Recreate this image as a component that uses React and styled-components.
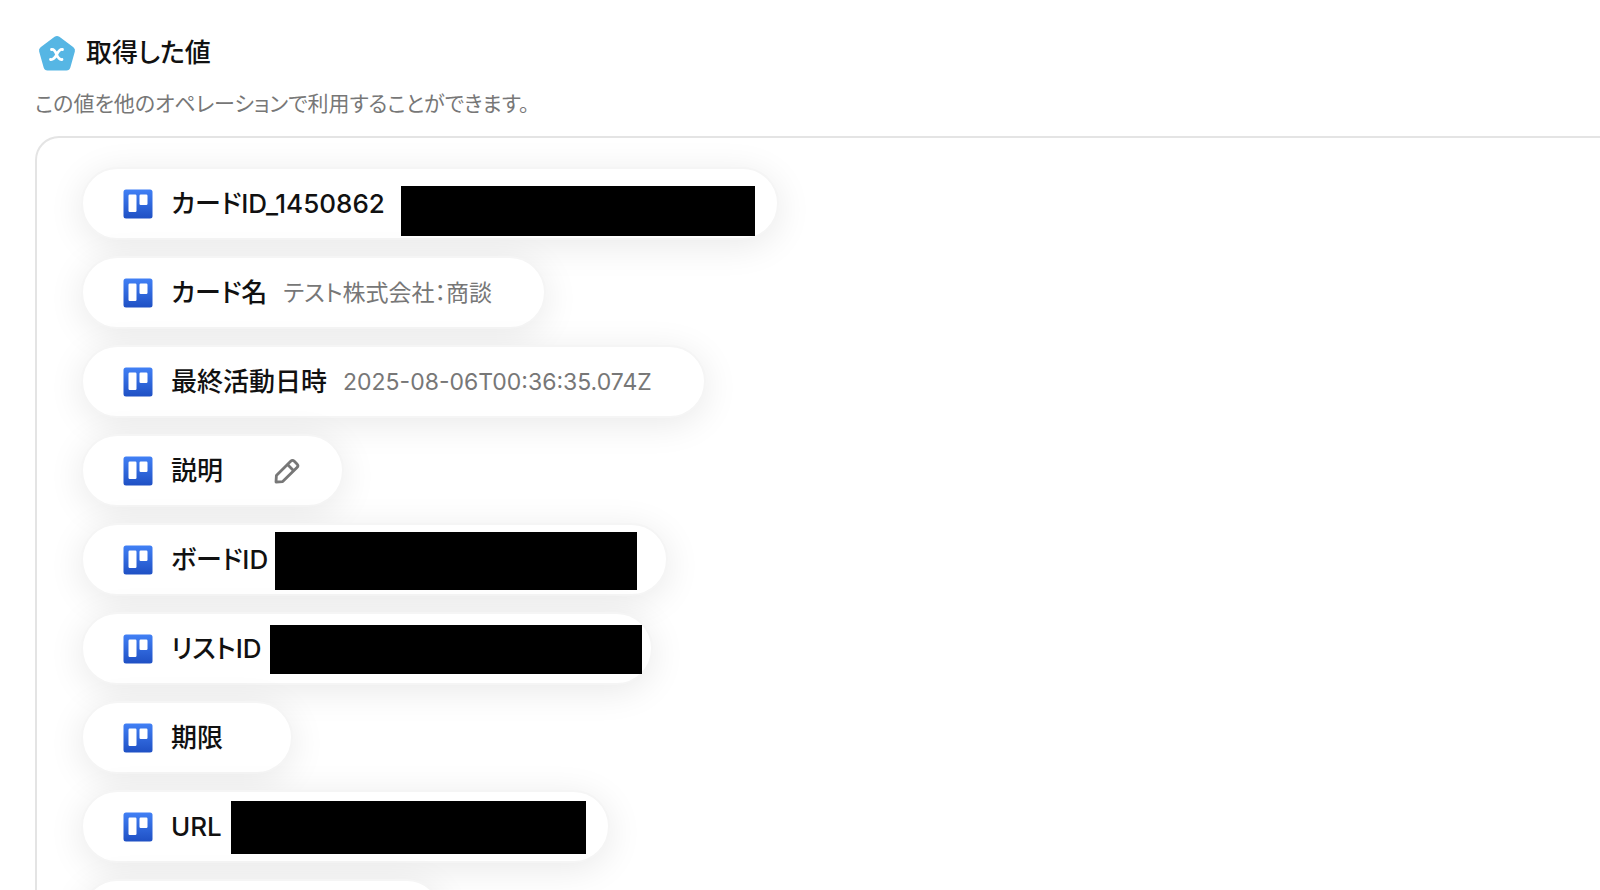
import React from "react";
import styled, { createGlobalStyle } from "styled-components";

const GlobalStyle = createGlobalStyle`
  * {
    box-sizing: border-box;
  }

  body {
    margin: 0;
    background: #fff;
    color: #111;
    font-family: Inter, "Noto Sans CJK JP", sans-serif;
    font-feature-settings: "palt";
  }
`;

const Page = styled.main`
  height: 100vh;
  overflow: hidden;
  padding: 33px 0 0 35px;
  display: flex;
  flex-direction: column;
`;

const Header = styled.header`
  display: flex;
  align-items: center;
  gap: 8px;
  height: 40px;
  padding-left: 1px;
`;

const Title = styled.h1`
  margin: 0;
  font-size: 26px;
  font-weight: 500;
  line-height: 40px;
`;

const Description = styled.p`
  margin: 15px 0 16px;
  color: #777;
  font-size: 21px;
  line-height: 32px;
`;

const Panel = styled.section`
  flex: 1 0 auto;
  padding: 29px 0 29px 44px;
  border: solid #e4e4e4;
  border-width: 2px 0 0 2px;
  border-radius: 24px 0 0 0;
`;

const List = styled.ul`
  display: flex;
  flex-direction: column;
  align-items: flex-start;
  gap: 16px;
  margin: 0;
  padding: 0;
  list-style: none;
`;

const Pill = styled.li`
  display: flex;
  align-items: center;
  height: 73px;
  padding: 0 ${(p) => (p.$editable ? 41 : 52)}px 0 40px;
  border: 2px solid #f5f5f5;
  border-radius: 37px;
  background: #fff;
  box-shadow: 0 6px 36px rgba(0, 0, 0, 0.09);
`;

const Label = styled.span`
  margin: 0 16px 0 18px;
  font-size: 26px;
  font-weight: 500;
  line-height: 40px;
  white-space: nowrap;
`;

const Value = styled.span`
  color: #777;
  font-size: 23px;
  line-height: 40px;
  white-space: nowrap;
`;

const HiddenValue = styled.span`
  position: relative;
  align-self: stretch;
  width: ${(p) => p.$room}px;
`;

// covers the private part of a value
const Mask = styled.span`
  position: absolute;
  left: ${(p) => p.$left}px;
  top: ${(p) => p.$top}px;
  width: ${(p) => p.$width}px;
  height: ${(p) => p.$height}px;
  background: #000;
`;

const EditButton = styled.button`
  display: flex;
  margin-left: 34px;
  padding: 0;
  border: 0;
  background: none;
  color: #777;
  cursor: pointer;
`;

const rows = [
  { label: "カードID_1450862", room: 324, mask: { left: 0, top: 17, width: 354, height: 50 } },
  { label: "カード名", value: "テスト株式会社：商談" },
  { label: "最終活動日時", value: "2025-08-06T00:36:35.074Z" },
  { label: "説明", editable: true },
  { label: "ボードID", room: 330, mask: { left: -9, top: 7, width: 362, height: 58 } },
  { label: "リストID", room: 321, mask: { left: -8, top: 11, width: 372, height: 49 } },
  { label: "期限" },
  { label: "URL", room: 318, mask: { left: -7, top: 9, width: 355, height: 53 } },
  { label: "", room: 202 },
];

function PentagonIcon() {
  return (
    <svg width="42" height="40" viewBox="0 0 42 40" aria-hidden="true">
      <path
        d="M21 7 L35 17.5 L30.5 33.5 H11.5 L7 17.5 Z"
        fill="#56b6e4"
        stroke="#56b6e4"
        strokeWidth="8"
        strokeLinejoin="round"
      />
      <path
        d="M15.5 16.5 C21.5 15.5 19.5 27.5 26 26.5 M26.5 16.5 C20.5 15.5 21 27.5 14.5 26.5"
        fill="none"
        stroke="#fff"
        strokeWidth="2.8"
        strokeLinecap="round"
      />
    </svg>
  );
}

function BoardIcon() {
  return (
    <svg width="30" height="30" viewBox="0 0 30 30" aria-hidden="true">
      <defs>
        <linearGradient id="board" x1="0" y1="0" x2="0" y2="1">
          <stop offset="0" stopColor="#4180f5" />
          <stop offset="1" stopColor="#1f50c4" />
        </linearGradient>
      </defs>
      <rect x="0.5" y="0.5" width="29" height="29" rx="2.5" fill="url(#board)" />
      <rect x="5.5" y="5.5" width="8" height="17.5" rx="1.2" fill="#fff" />
      <rect x="16.5" y="5.5" width="8" height="10.5" rx="1.2" fill="#fff" />
    </svg>
  );
}

function PencilIcon() {
  return (
    <svg
      width="28"
      height="28"
      viewBox="0 0 28 28"
      fill="none"
      stroke="currentColor"
      strokeWidth="2.8"
      strokeLinejoin="round"
      aria-hidden="true"
    >
      <path d="M3 25 L3.4 18.5 L17.7 4.2 Q19.5 2.4 21.3 4.2 L24 6.9 Q25.8 8.7 24 10.5 L9.7 24.6 Z" />
      <path d="M14.5 7.5 L20.7 13.7" />
    </svg>
  );
}

export default function App() {
  return (
    <>
      <GlobalStyle />
      <Page>
        <Header>
          <PentagonIcon />
          <Title>取得した値</Title>
        </Header>
        <Description>この値を他のオペレーションで利用することができます。</Description>
        <Panel>
          <List>
            {rows.map((row, i) => (
              <Pill key={i} $editable={row.editable}>
                <BoardIcon />
                <Label>{row.label}</Label>
                {row.value && <Value>{row.value}</Value>}
                {row.room && (
                  <HiddenValue $room={row.room}>
                    {row.mask && (
                      <Mask
                        $left={row.mask.left}
                        $top={row.mask.top}
                        $width={row.mask.width}
                        $height={row.mask.height}
                      />
                    )}
                  </HiddenValue>
                )}
                {row.editable && (
                  <EditButton type="button" aria-label="説明を編集">
                    <PencilIcon />
                  </EditButton>
                )}
              </Pill>
            ))}
          </List>
        </Panel>
      </Page>
    </>
  );
}
